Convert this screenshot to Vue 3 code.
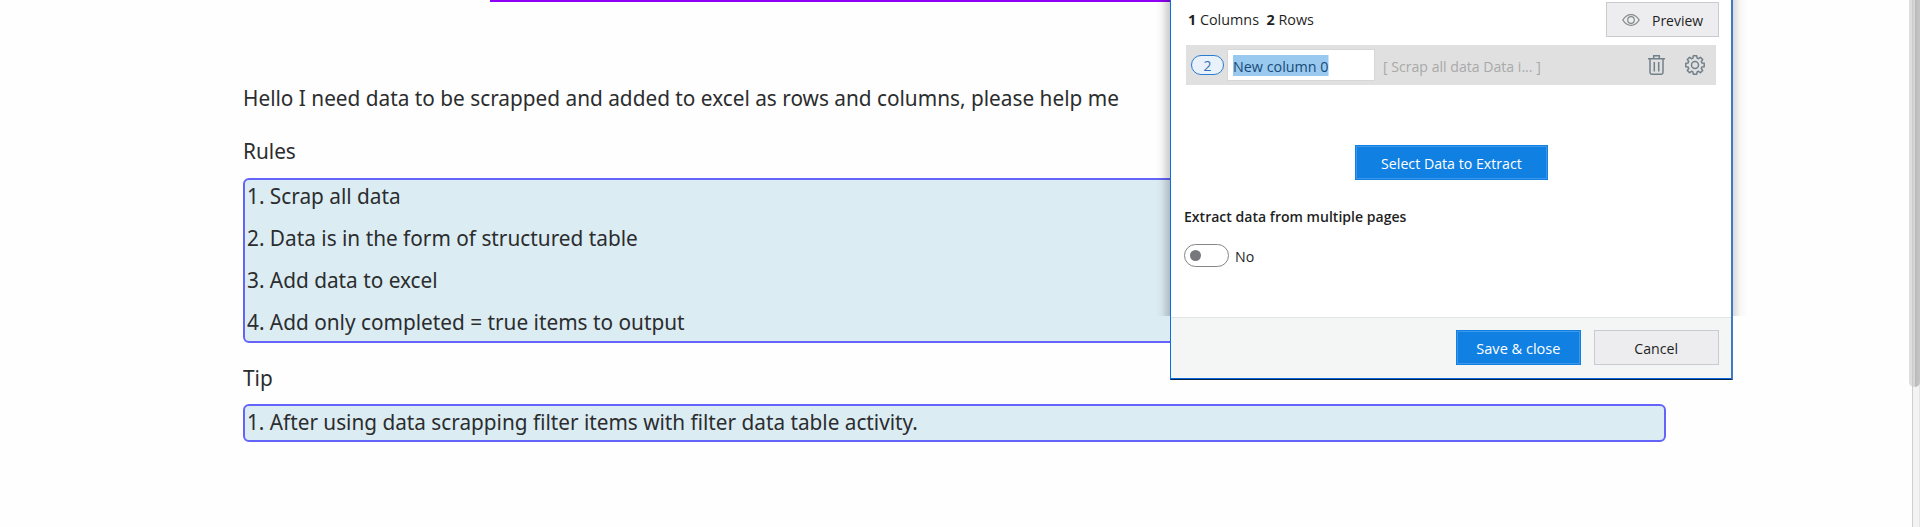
<script setup>
const rules = ['Scrap all data', 'Data is in the form of structured table', 'Add data to excel', 'Add only completed = true items to output']
const tips = ['After using data scrapping filter items with filter data table activity.']
</script>

<template>
  <div class="screen">
    <div class="accent"></div>
    <main class="content">
      <p class="intro"><span class="t">Hello I need data to be scrapped and added to excel as rows and columns, please help me</span></p>
      <p class="label rules-label"><span class="t">Rules</span></p>
      <ol class="box rules">
        <li v-for="(rule, i) in rules" :key="rule"><span class="t">{{ i + 1 }}. {{ rule }}</span></li>
      </ol>
      <p class="label tip-label"><span class="t">Tip</span></p>
      <ol class="box tips">
        <li v-for="(tip, i) in tips" :key="tip"><span class="t">{{ i + 1 }}. {{ tip }}</span></li>
      </ol>
    </main>

    <div class="shadow shadow-left"></div>
    <div class="shadow shadow-right"></div>
    <section class="dialog">
      <header class="summary">
        <div class="counts"><span class="t"><b>1</b> Columns&nbsp; <b>2</b> Rows</span></div>
        <button class="btn preview">
          <svg width="18" height="12" viewBox="0 0 18 12" fill="none" stroke="#85888b" stroke-width="1.2">
            <path d="M.8 6C3 2.500 5.700.7 9 .7S15 2.500 17.200 6C15 9.500 12.300 11.300 9 11.300S3 9.500.8 6Z" />
            <circle cx="9" cy="6" r="3.300" />
          </svg>
          <span class="t">Preview</span>
        </button>
      </header>

      <div class="column-row">
        <span class="pill">2</span>
        <div class="name"><span class="selected t">New column 0</span></div>
        <span class="source t">[ Scrap all data Data i... ]</span>
        <svg class="trash" width="17" height="20" viewBox="0 0 17 20" fill="none" stroke="#72808a" stroke-width="1.500">
          <path d="M0 3.800H17M5.700 3.500V.8H11.300V3.500M2 4V17.500Q2 19.200 3.700 19.200H13.300Q15 19.200 15 17.500V4M6.300 7V16.500M10.700 7V16.500" />
        </svg>
        <svg class="gear" width="20" height="20" viewBox="-10 -10 20 20" fill="none" stroke="#72808a" stroke-width="1.500" stroke-linejoin="round">
          <path d="M-1.700-9.200H1.700L2.100-6.900L3.500-6.300L5.400-7.700L7.700-5.400L6.300-3.500L6.900-2.100L9.200-1.700V1.700L6.900 2.100L6.300 3.500L7.700 5.400L5.400 7.700L3.500 6.300L2.100 6.900L1.700 9.200H-1.700L-2.100 6.900L-3.500 6.300L-5.400 7.700L-7.700 5.400L-6.300 3.500L-6.900 2.100L-9.200 1.700V-1.700L-6.900-2.100L-6.300-3.500L-7.700-5.400L-5.400-7.700L-3.500-6.300L-2.100-6.900Z" />
          <circle r="3.500" />
        </svg>
      </div>

      <button class="btn primary select"><span class="t">Select Data to Extract</span></button>
      <h2 class="heading"><span class="t">Extract data from multiple pages</span></h2>
      <div class="toggle-row"><span class="toggle"><i></i></span><span class="t">No</span></div>

      <footer class="footer">
        <button class="btn primary save"><span class="t">Save &amp; close</span></button>
        <button class="btn"><span class="t">Cancel</span></button>
      </footer>
    </section>

    <div class="scrollbar"><div class="thumb"></div></div>
  </div>
</template>

<style>
body { background: #fefefe; overflow: hidden; }
</style>

<style scoped>
* { box-sizing: border-box; }
.screen { position: relative; width: 1920px; height: 527px; overflow: hidden; background: #fefefe; font-family: "Open Sans", "Noto Sans", sans-serif; }
.t { display: inline-block; transform: scaleX(.945); transform-origin: left; }
.accent { width: 680px; height: 2px; margin-left: 490px; background: #9000f5; }
.content { width: 1423px; margin-left: 243px; font-family: "Noto Sans", sans-serif; font-size: 22px; color: #2b2d2e; white-space: nowrap; }
.intro, .label { margin: 0; height: 42px; line-height: 40px; }
.intro { margin-top: 75px; }
.rules-label { margin-top: 11px; }
.tip-label { margin-top: 14px; }
.box { list-style: none; margin: 6px 0 0; padding: 0 2px; border: 2px solid #6464fa; border-radius: 6px; background: #dcecf3; }
.rules { height: 165px; }
.tips { margin-top: 5px; }
.tips .t { transform: scaleX(.943); }
.box li { height: 34px; line-height: 30px; }
.box li + li { margin-top: 8px; }

.dialog { position: absolute; left: 1170px; top: 0; width: 563px; height: 380px; display: flex; flex-direction: column; background: #fff; border: solid; border-width: 0 2px 1px 1px; border-color: #3d7cc3 #3d7cc3 #0b2344 #0870e5; box-shadow: inset 0 -1px #0868df; font-size: 15px; color: #1f1f1f; white-space: nowrap; }
.shadow { position: absolute; top: 0; width: 14px; height: 316px; }
.shadow-left { left: 1156px; background: linear-gradient(to right, transparent, rgba(0,0,0,.04) 40%, rgba(0,0,0,.2)); }
.shadow-right { left: 1733px; background: linear-gradient(to left, transparent, rgba(0,0,0,.03) 50%, rgba(0,0,0,.14)); }
.btn { display: flex; align-items: center; justify-content: center; width: 125px; height: 35px; padding: 0; border: 1px solid #cacbd0; background: #ededf0; font: inherit; color: inherit; flex: none; }
.btn .t { transform-origin: center; }
.primary { background: #1080e2; border-color: #1080e2; box-shadow: inset 0 0 0 1px #3c97ea; color: #fff; }
.summary { display: flex; justify-content: space-between; padding: 2px 12px 0 17px; }
.counts { line-height: 35px; }
.counts .t { transform: scaleX(.957); }
.preview { width: 113px; gap: 12px; justify-content: flex-start; padding-left: 15px; }
.preview .t { transform: scaleX(.93); transform-origin: left; }
.column-row { display: flex; align-items: center; width: 530px; height: 40px; margin: 8px 0 0 15px; padding-left: 5px; background: #e0e0e0; flex: none; }
.pill { width: 33px; height: 20px; border: 1px solid #2a7cd0; border-radius: 10px; background: #e9f1fb; color: #3471b3; text-align: center; line-height: 19px; font-size: 14px; }
.name { width: 148px; height: 32px; margin-left: 3px; padding: 5px; border: 1px solid #d5d7d9; background: #fff; color: #174b78; }
.selected { display: block; width: max-content; height: 21px; line-height: 23px; background: #99c9ef; transform: scaleX(.955); }
.source { margin: 2px 0 0 8px; color: #a9a9a9; transform: scaleX(.94); }
.trash { margin-left: auto; }
.gear { margin: 0 11px 0 20px; }
.select { width: 193px; margin: 60px 0 0 184px; }
.heading { margin: 25px 0 0 13px; line-height: 22px; font-size: 15px; font-weight: 600; }
.heading .t { transform: scaleX(.937); }
.toggle-row { display: flex; align-items: center; gap: 6px; margin: 17px 0 0 13px; height: 23px; }
.toggle { display: flex; align-items: center; width: 45px; height: 23px; padding-left: 5px; border: 1px solid #858585; border-radius: 12px; }
.toggle i { width: 11px; height: 11px; border-radius: 50%; background: #77787b; }
.save .t { transform: scaleX(.97); }
.footer { display: flex; justify-content: flex-end; gap: 13px; margin-top: auto; height: 62px; padding: 12px 12px 0 0; border-top: 1px solid #e0e4e2; background: linear-gradient(#f4f6f5, #f4f6f5) 0 0 / 100% 60px no-repeat; }

.scrollbar { position: absolute; right: 0; top: 0; width: 8px; height: 527px; border-left: 1px solid #cfcfcf; background: linear-gradient(to right, #f3f3f3 6px, #e5e5e5 6px); }
.thumb { position: absolute; left: -4px; top: 0; width: 11px; height: 387px; border-radius: 0 0 5px 5px; background: linear-gradient(to right, #dedede 3px, #cacaca 3px, #cacaca 4px, #d6d6d6 4px, #d6d6d6 6px, #bababa 6px, #c4c4c4 10px); }
</style>
